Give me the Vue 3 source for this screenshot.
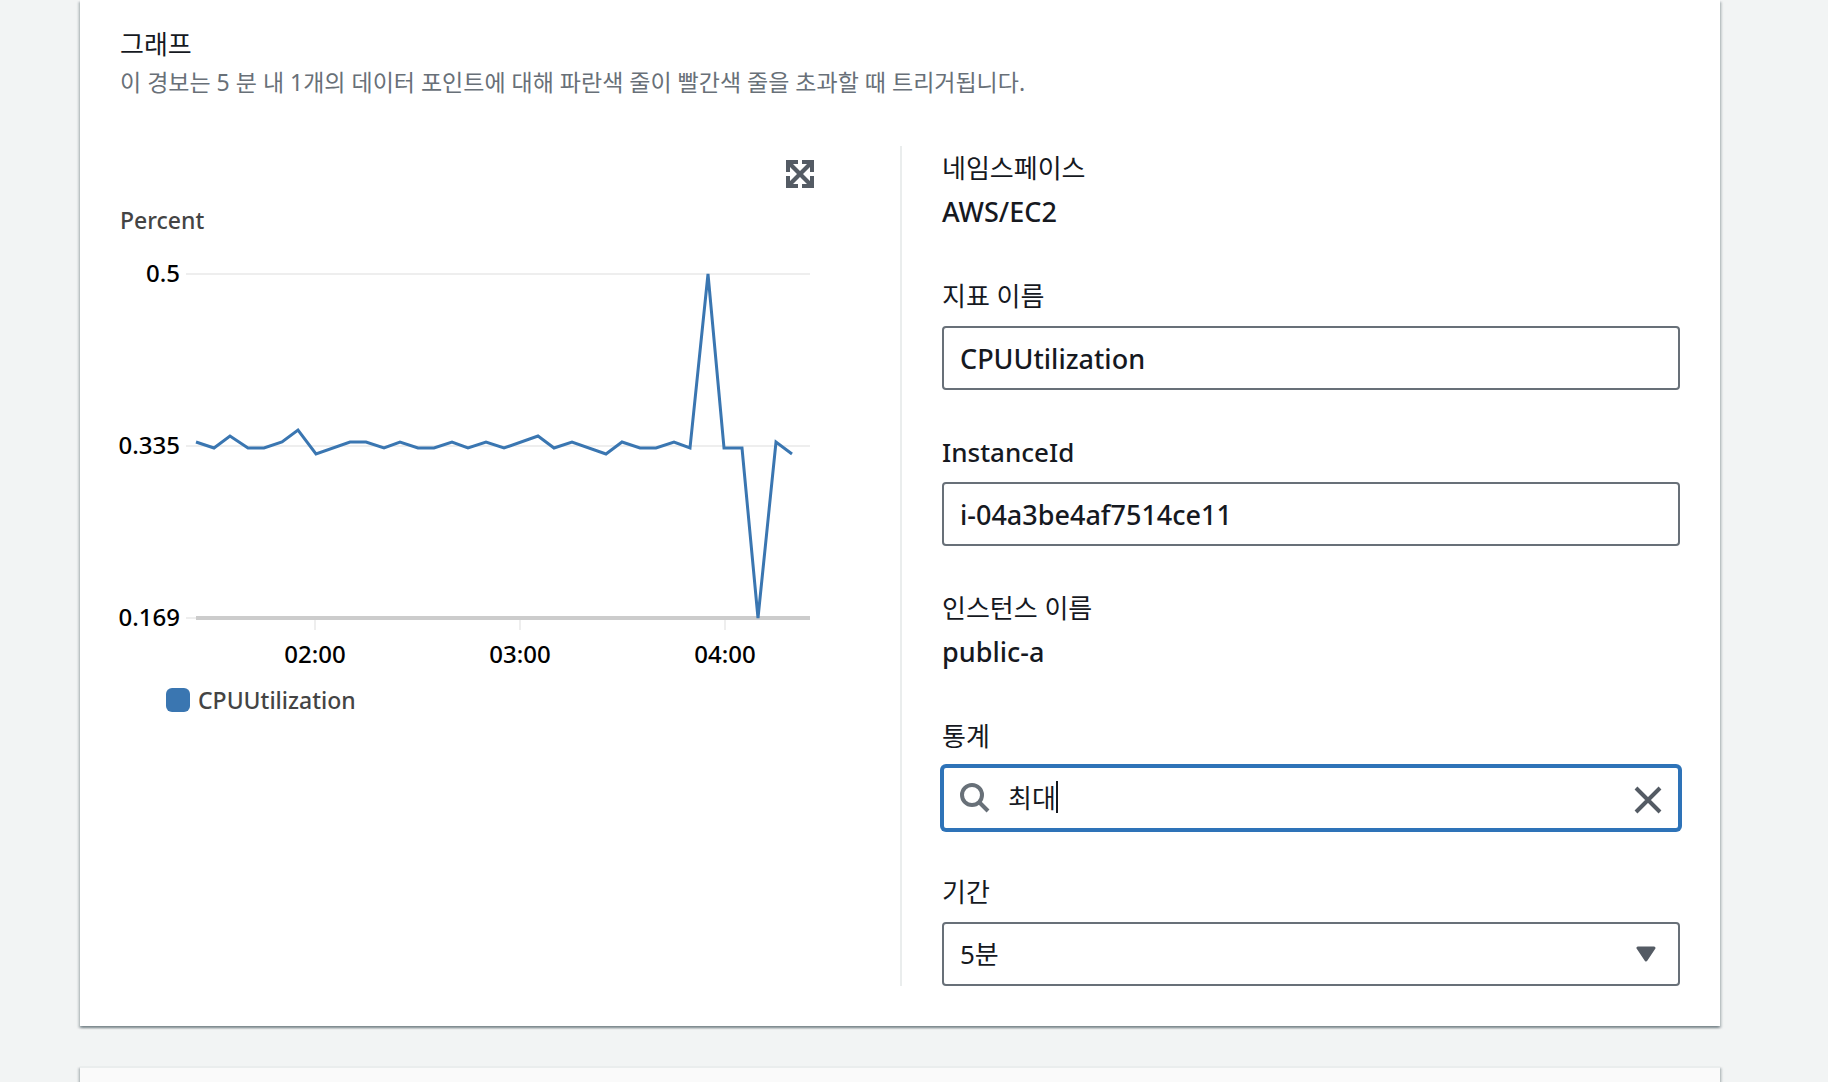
<script setup>
import { ref } from 'vue'

const metricName = ref('CPUUtilization')
const instanceId = ref('i-04a3be4af7514ce11')
const statistic = ref('최대')
const period = ref('5분')

const yTicks = [
  { label: '0.5', y: 274 },
  { label: '0.335', y: 446 },
  { label: '0.169', y: 618 }
]
const xTicks = [
  { label: '02:00', x: 315 },
  { label: '03:00', x: 520 },
  { label: '04:00', x: 725 }
]
const series = [
  [196, 442], [214, 448], [230, 436], [248, 448], [264, 448], [282, 442],
  [298, 430], [316, 454], [350, 442], [366, 442], [384, 448], [400, 442],
  [418, 448], [434, 448], [452, 442], [468, 448], [486, 442], [504, 448],
  [538, 436], [554, 448], [572, 442], [606, 454], [622, 442], [640, 448],
  [656, 448], [674, 442], [690, 448], [708, 274], [724, 448], [742, 448],
  [758, 618], [776, 442], [792, 454]
]
const points = series.map((p) => p.join(',')).join(' ')
</script>

<template>
  <main class="page">
    <section class="panel">
      <header class="head">
        <h2>그래프</h2>
        <p>이 경보는 5 분 내 1개의 데이터 포인트에 대해 파란색 줄이 빨간색 줄을 초과할 때 트리거됩니다.</p>
      </header>
      <div class="columns">
        <div class="graph">
          <button class="expand" type="button" aria-label="확대">
            <svg viewBox="0 0 28 28" width="28" height="28">
              <path d="M0 0h12v4H7l7 7 7-7h-5V0h12v12h-4V7l-7 7 7 7v-5h4v12H16v-4h5l-7-7-7 7h5v4H0V16h4v5l7-7-7-7v5H0z" />
            </svg>
          </button>
          <div class="unit">Percent</div>
          <svg class="chart" viewBox="120 236 694 440" role="img" aria-label="CPUUtilization">
            <g v-for="t in yTicks" :key="t.label">
              <line class="grid" x1="186" x2="810" :y1="t.y" :y2="t.y" />
              <text x="180" :y="t.y + 8" text-anchor="end">{{ t.label }}</text>
            </g>
            <line class="axis" x1="196" x2="810" y1="618" y2="618" />
            <g v-for="t in xTicks" :key="t.label">
              <line class="grid" :x1="t.x" :x2="t.x" y1="620" y2="630" />
              <text :x="t.x" y="663" text-anchor="middle">{{ t.label }}</text>
            </g>
            <polyline class="series" :points="points" />
          </svg>
          <div class="legend"><span class="swatch"></span>CPUUtilization</div>
        </div>
        <form class="fields" @submit.prevent>
          <div class="field">
            <div class="label">네임스페이스</div>
            <div class="value">AWS/EC2</div>
          </div>
          <div class="field">
            <label class="label" for="metric">지표 이름</label>
            <input id="metric" v-model="metricName" class="control latin" type="text" />
          </div>
          <div class="field">
            <label class="label strong" for="instance">InstanceId</label>
            <input id="instance" v-model="instanceId" class="control latin" type="text" />
          </div>
          <div class="field">
            <div class="label">인스턴스 이름</div>
            <div class="value">public-a</div>
          </div>
          <div class="field">
            <label class="label" for="stat">통계</label>
            <div class="control search">
              <svg class="glass" viewBox="0 0 30 30" width="30" height="30">
                <circle cx="12" cy="12" r="10" />
                <path d="M19 19l9 9" />
              </svg>
              <input id="stat" v-model="statistic" type="text" />
              <span class="caret"></span>
              <button type="button" aria-label="지우기">
                <svg viewBox="0 0 28 28" width="28" height="28">
                  <path d="M2 2l24 24M26 2L2 26" />
                </svg>
              </button>
            </div>
          </div>
          <div class="field">
            <label class="label" for="period">기간</label>
            <div class="picker">
              <select id="period" v-model="period" class="control">
                <option>5분</option>
              </select>
              <svg class="arrow" viewBox="0 0 20 16" width="20" height="16">
                <path d="M2 2h16l-8 12z" />
              </svg>
            </div>
          </div>
        </form>
      </div>
    </section>
    <section class="panel next"></section>
  </main>
</template>

<style>
body {
  background: #f2f4f4;
}
</style>

<style scoped>
.page {
  display: flex;
  flex-direction: column;
  gap: 40px;
  height: 100vh;
  overflow: hidden;
  padding: 0 108px 0 80px;
  font-family: "Noto Sans", "Noto Sans CJK KR", sans-serif;
  font-size: 26px;
  line-height: 44px;
  color: #16191f;
}
.panel {
  flex: none;
  padding: 22px 40px 40px;
  background: #fff;
  box-shadow: 0 2px 2px rgba(0, 28, 36, 0.3), 2px 2px 2px rgba(0, 28, 36, 0.15), -2px 2px 2px rgba(0, 28, 36, 0.15);
}
.next {
  border-top: 2px solid #eaeded;
  background: #fafafa;
}
h2,
p {
  margin: 0;
}
h2 {
  font: inherit;
}
.head {
  margin-bottom: 48px;
}
.head p {
  font-size: 23px;
  line-height: 32px;
  color: #687078;
}
.columns {
  display: grid;
  grid-template-columns: 1fr 1fr;
}
.graph {
  display: flex;
  flex-direction: column;
  padding: 14px 86px 0 0;
  font-size: 23px;
  font-weight: 500;
  line-height: 32px;
  color: #444;
}
button {
  display: flex;
  padding: 0;
  border: 0;
  background: none;
}
.expand {
  align-self: flex-end;
  fill: #545b64;
}
.unit {
  margin-top: 16px;
}
.chart {
  display: block;
  width: 100%;
  overflow: visible;
}
.chart text {
  font-size: 24px;
  fill: #000;
}
.grid {
  stroke: #eee;
  stroke-width: 2;
}
.axis {
  stroke: #ccc;
  stroke-width: 4;
}
.series {
  fill: none;
  stroke: #3a76b1;
  stroke-width: 3;
}
.legend {
  display: flex;
  align-items: center;
  gap: 8px;
  margin-top: 8px;
  padding-left: 46px;
}
.swatch {
  width: 24px;
  height: 24px;
  border-radius: 6px;
  background: #3a76b1;
}
.fields {
  display: flex;
  flex-direction: column;
  gap: 40px;
  padding-left: 40px;
  border-left: 2px solid #eaeded;
}
.label {
  display: block;
}
.strong {
  font-weight: 500;
}
.value {
  font-size: 27px;
  font-weight: 500;
}
.control {
  display: block;
  box-sizing: border-box;
  width: 100%;
  height: 64px;
  margin-top: 8px;
  padding: 0 16px;
  border: 2px solid #687078;
  border-radius: 4px;
  background: #fff;
  font: inherit;
  color: inherit;
}
.latin {
  font-size: 27px;
  font-weight: 500;
}
.search {
  position: relative;
  display: flex;
  align-items: center;
  border-color: #2e73b8;
  box-shadow: 0 0 0 2px #2e73b8;
}
.search input {
  flex: 1;
  min-width: 0;
  height: 44px;
  padding: 0 0 0 18px;
  border: 0;
  outline: 0;
  background: none;
  font: inherit;
  color: inherit;
}
.caret {
  position: absolute;
  left: 112px;
  top: 13px;
  width: 2px;
  height: 32px;
  background: #16191f;
}
.glass {
  fill: none;
  stroke: #687078;
  stroke-width: 4;
}
.search button {
  padding-top: 4px;
}
.search button svg {
  stroke: #545b64;
  stroke-width: 4;
}
.picker {
  position: relative;
}
select {
  appearance: none;
}
.arrow {
  position: absolute;
  right: 24px;
  top: 24px;
  fill: #545b64;
  stroke: #545b64;
  stroke-width: 3;
  stroke-linejoin: round;
  pointer-events: none;
}
</style>
